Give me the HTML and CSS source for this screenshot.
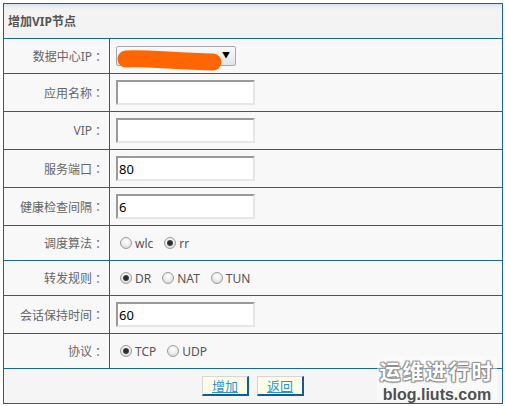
FILE: index.html
```html
<!DOCTYPE html>
<html lang="zh-CN">
<head>
<meta charset="utf-8">
<title>增加VIP节点</title>
<link rel="stylesheet" href="styles.css">
</head>
<body>
<form class="panel">
  <div class="head">增加VIP节点</div>
  <div class="row short">
    <div class="lbl">数据中心IP<span class="colon">：</span></div>
    <div class="val">
      <div class="select">
        <svg class="blob" width="110" height="24" viewBox="0 0 110 24"><path d="M9 10 C30 9 55 12 96 13" stroke="#ff6600" stroke-width="17" stroke-linecap="round" fill="none"/></svg>
        <span class="arrow">▼</span>
      </div>
    </div>
  </div>
  <div class="row tall">
    <div class="lbl">应用名称<span class="colon">：</span></div>
    <div class="val"><input class="txt" type="text" value=""></div>
  </div>
  <div class="row tall">
    <div class="lbl">VIP<span class="colon">：</span></div>
    <div class="val"><input class="txt" type="text" value=""></div>
  </div>
  <div class="row tall">
    <div class="lbl">服务端口<span class="colon">：</span></div>
    <div class="val"><input class="txt" type="text" value="80"></div>
  </div>
  <div class="row tall">
    <div class="lbl">健康检查间隔<span class="colon">：</span></div>
    <div class="val"><input class="txt" type="text" value="6"></div>
  </div>
  <div class="row short">
    <div class="lbl">调度算法<span class="colon">：</span></div>
    <div class="val">
      <span class="opt"><span class="radio"></span>wlc</span>
      <span class="opt"><span class="radio on"></span>rr</span>
    </div>
  </div>
  <div class="row short">
    <div class="lbl">转发规则<span class="colon">：</span></div>
    <div class="val">
      <span class="opt"><span class="radio on"></span>DR</span>
      <span class="opt"><span class="radio"></span>NAT</span>
      <span class="opt"><span class="radio"></span>TUN</span>
    </div>
  </div>
  <div class="row tall">
    <div class="lbl">会话保持时间<span class="colon">：</span></div>
    <div class="val"><input class="txt" type="text" value="60"></div>
  </div>
  <div class="row short">
    <div class="lbl">协议<span class="colon">：</span></div>
    <div class="val">
      <span class="opt"><span class="radio on"></span>TCP</span>
      <span class="opt"><span class="radio"></span>UDP</span>
    </div>
  </div>
  <div class="foot">
    <button class="btn" type="button">增加</button>
    <button class="btn" type="button">返回</button>
  </div>
</form>
<div class="watermark">
  <div class="wm-cn">运维进行时</div>
  <div class="wm-en">blog.liuts.com</div>
</div>
</body>
</html>
```

FILE: styles.css
```css
html, body {
  margin: 0;
  padding: 0;
  background: #ffffff;
}
body {
  padding: 3px;
  font-family: "Noto Sans", "Noto Sans CJK SC", sans-serif;
  font-size: 12px;
  color: #666;
}
.panel {
  width: 500px;
  box-sizing: border-box;
  border: 1px solid #15649f;
  margin: 0;
  background: #f8f8f8;
}
.head {
  height: 34px;
  border-bottom: 1px solid #15649f;
  background: linear-gradient(#d4e1ee 0px, #ebeef2 3px, #f3f3f3 6px, #f3f3f3 100%);
  font-weight: bold;
  color: #555;
  display: flex;
  align-items: center;
  padding-left: 4px;
}
.row {
  display: grid;
  grid-template-columns: 106px 1fr;
  border-bottom: 1px solid #15649f;
}
.row.short { height: 34px; }
.row.tall { height: 37px; }
.lbl {
  border-right: 1px solid #15649f;
  display: flex;
  align-items: center;
  justify-content: flex-end;
  padding-right: 5px;
  color: #666;
}
.colon {
  font-family: "Noto Sans CJK JP", sans-serif;
}
.val {
  display: flex;
  align-items: center;
  padding-left: 6px;
  color: #555;
}
.txt {
  box-sizing: border-box;
  width: 139px;
  height: 25px;
  margin: 0;
  border: 2px solid;
  border-color: #9a9a9a #e6e6e6 #e6e6e6 #9a9a9a;
  background: #fff;
  padding: 0 1px;
  font-family: "Noto Sans", sans-serif;
  font-size: 13px;
  color: #000;
  outline: none;
}
.select {
  position: relative;
  box-sizing: border-box;
  width: 120px;
  height: 20px;
  border: 1px solid #a8a8a8;
  border-radius: 2px;
  background: linear-gradient(#fafafa, #e4e4e4);
}
.blob {
  position: absolute;
  left: 0;
  top: 2px;
}
.arrow {
  position: absolute;
  right: 5px;
  top: 2px;
  font-size: 8px;
  line-height: 12px;
  color: #000;
}
.opt {
  display: inline-flex;
  align-items: center;
}
.opt + .opt { margin-left: 7px; }
.radio {
  box-sizing: border-box;
  width: 12px;
  height: 12px;
  margin: 0 3px 0 4px;
  border-radius: 50%;
  border: 1px solid #9c9c9c;
  background: radial-gradient(circle at 50% 35%, #ffffff 0%, #eeeeee 45%, #cfcfcf 100%);
  position: relative;
}
.radio.on::after {
  content: "";
  position: absolute;
  left: 2px;
  top: 2px;
  width: 6px;
  height: 6px;
  border-radius: 50%;
  background: radial-gradient(circle, #222 0%, #333 50%, #777 100%);
}
.foot {
  height: 34px;
  display: flex;
  align-items: center;
  justify-content: center;
  gap: 8px;
  background: #f5f5f5;
}
.btn {
  box-sizing: border-box;
  width: 47px;
  height: 20px;
  margin: 0;
  padding: 0;
  border-style: solid;
  border-width: 1px 2px 2px 1px;
  border-color: #d6d6d6 #0f5c98 #0f5c98 #d6d6d6;
  background: #fefee8;
  font-family: "Noto Sans CJK SC", sans-serif;
  font-size: 13px;
  line-height: 16px;
  color: #2a96d4;
  text-decoration: underline;
}
.watermark {
  position: absolute;
  left: 377px;
  top: 355px;
  width: 120px;
  height: 48px;
  background: linear-gradient(rgba(255, 255, 255, 0) 0px, rgba(255, 255, 255, 0.45) 3px, rgba(255, 255, 255, 0.45) 44px, rgba(255, 255, 255, 0) 48px);
  text-align: center;
}
.wm-cn {
  font-family: "Noto Sans CJK SC", sans-serif;
  font-weight: bold;
  font-size: 21px;
  line-height: 31px;
  letter-spacing: 2px;
  color: #ffffff;
  text-shadow: 0 0 1px #777, 1px 1px 1px #888, -1px -1px 1px #999, 1px -1px 1px #999, -1px 1px 1px #999;
}
.wm-en {
  font-family: "Liberation Sans", sans-serif;
  font-weight: bold;
  font-size: 16px;
  line-height: 17px;
  color: #505050;
}
```
